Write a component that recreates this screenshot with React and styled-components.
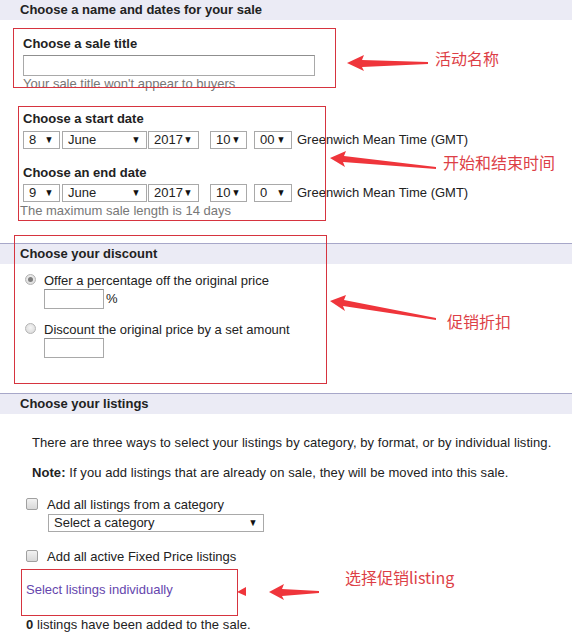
import React from 'react';
import styled, { createGlobalStyle } from 'styled-components';

const GlobalStyle = createGlobalStyle`
  html, body {
    margin: 0;
    padding: 0;
    background: #fff;
  }
  body {
    font-family: "Liberation Sans", Arial, sans-serif;
    font-size: 13px;
    color: #222;
  }
`;

const Page = styled.div`
  position: relative;
  width: 572px;
  height: 640px;
  overflow: hidden;
`;

const SectionHeader = styled.div`
  height: 20px;
  line-height: 20px;
  padding-left: 20px;
  background: #ebebf5;
  border-top: ${(p) => (p.$first ? 'none' : '1px solid #a7a7c9')};
  margin-top: ${(p) => p.$mt || 0}px;
  font-weight: bold;
  color: #222;
`;

const Body = styled.div`
  display: flex;
  flex-direction: column;
  align-items: flex-start;
  padding-left: ${(p) => p.$pl}px;
`;

const Label = styled.div`
  font-weight: bold;
  line-height: 16px;
  margin-top: ${(p) => p.$mt || 0}px;
`;

const Hint = styled.div`
  color: #777;
  line-height: 15px;
  margin-top: ${(p) => p.$mt || 0}px;
  margin-left: ${(p) => p.$ml || 0}px;
`;

const TextInput = styled.div`
  box-sizing: border-box;
  width: ${(p) => p.$w}px;
  height: ${(p) => p.$h}px;
  border: 1px solid #a9a9a9;
  border-top-color: #8f8f8f;
  background: #fff;
  margin-top: ${(p) => p.$mt || 0}px;
`;

const DateRow = styled.div`
  display: flex;
  align-items: center;
  margin-top: ${(p) => p.$mt || 0}px;
  height: 18px;
`;

const SelectBox = styled.div`
  box-sizing: border-box;
  display: flex;
  align-items: center;
  justify-content: space-between;
  width: ${(p) => p.$w}px;
  height: ${(p) => p.$h || 18}px;
  margin-left: ${(p) => p.$ml || 0}px;
  margin-top: ${(p) => p.$mt || 0}px;
  padding: 0 5px 0 5px;
  border: 1px solid #a9a9a9;
  background: #fff;
  line-height: 16px;
  color: #222;
`;

const Caret = styled.span`
  font-size: 10px;
  color: #111;
  transform: scaleX(0.9);
`;

const Zone = styled.span`
  margin-left: 5px;
  line-height: 16px;
`;

const OptionRow = styled.div`
  display: flex;
  align-items: flex-start;
  margin-top: ${(p) => p.$mt || 0}px;
  line-height: 16px;
`;

const Radio = styled.span`
  box-sizing: border-box;
  width: 11px;
  height: 11px;
  margin: 1px 8px 0 0;
  border-radius: 50%;
  border: 1px solid #b4b4b4;
  background: radial-gradient(circle at 50% 40%, #f4f4f4, #d6d6d6);
  display: flex;
  align-items: center;
  justify-content: center;

  &::after {
    content: '';
    width: 5px;
    height: 5px;
    border-radius: 50%;
    background: ${(p) => (p.$checked ? '#7d7d7d' : 'transparent')};
  }
`;

const Checkbox = styled.span`
  box-sizing: border-box;
  width: 12px;
  height: 12px;
  margin: 1px 9px 0 0;
  border-radius: 2px;
  border: 1px solid #a0a0a0;
  background: linear-gradient(#f2f2f2, #d8d8d8);
`;

const AmountRow = styled.div`
  display: flex;
  align-items: flex-end;
  margin-left: 19px;
`;

const Percent = styled.span`
  margin-left: 2px;
  line-height: 16px;
  margin-bottom: 2px;
`;

const Para = styled.div`
  line-height: 16px;
  letter-spacing: 0.07px;
  margin-top: ${(p) => p.$mt || 0}px;
  margin-left: ${(p) => p.$ml || 0}px;
`;

const Link = styled.a`
  color: #6546ad;
  text-decoration: none;
  line-height: 16px;
  margin-top: ${(p) => p.$mt || 0}px;
`;

/* annotation layer drawn over the screenshot */
const AnnoBox = styled.div`
  position: absolute;
  left: ${(p) => p.$x}px;
  top: ${(p) => p.$y}px;
  width: ${(p) => p.$w}px;
  height: ${(p) => p.$h}px;
  border: 1px solid #d6343f;
  box-sizing: border-box;
  pointer-events: none;
`;

const AnnoLabel = styled.div`
  position: absolute;
  left: ${(p) => p.$x}px;
  top: ${(p) => p.$y}px;
  font-family: "Noto Sans CJK SC", "Liberation Sans", sans-serif;
  font-size: 16px;
  line-height: 20px;
  color: #dd3f47;
  white-space: nowrap;
`;

const ArrowLayer = styled.svg`
  position: absolute;
  left: 0;
  top: 0;
  pointer-events: none;
`;

const Select = ({ w, value, ml, mt, h }) => (
  <SelectBox $w={w} $ml={ml} $mt={mt} $h={h}>
    <span>{value}</span>
    <Caret>▼</Caret>
  </SelectBox>
);

const DateSelects = ({ day, minute, mt }) => (
  <DateRow $mt={mt}>
    <Select w={37} value={day} />
    <Select w={85} value="June" ml={2} />
    <Select w={51} value="2017" ml={1} />
    <Select w={37} value="10" ml={11} />
    <Select w={38} value={minute} ml={7} />
    <Zone>Greenwich Mean Time (GMT)</Zone>
  </DateRow>
);

export default function App() {
  return (
    <Page>
      <GlobalStyle />

      <SectionHeader $first>Choose a name and dates for your sale</SectionHeader>
      <Body $pl={23}>
        <Label $mt={16}>Choose a sale title</Label>
        <TextInput $w={292} $h={21} $mt={3} />
        <Hint>Your sale title won't appear to buyers</Hint>

        <Label $mt={20}>Choose a start date</Label>
        <DateSelects day="8" minute="00" mt={4} />

        <Label $mt={16}>Choose an end date</Label>
        <DateSelects day="9" minute="0" mt={3} />
        <Hint $mt={1} $ml={-3}>The maximum sale length is 14 days</Hint>
      </Body>

      <SectionHeader $mt={25}>Choose your discount</SectionHeader>
      <Body $pl={25}>
        <OptionRow $mt={9}>
          <Radio $checked />
          Offer a percentage off the original price
        </OptionRow>
        <AmountRow>
          <TextInput $w={60} $h={20} />
          <Percent>%</Percent>
        </AmountRow>
        <OptionRow $mt={13}>
          <Radio />
          Discount the original price by a set amount
        </OptionRow>
        <AmountRow>
          <TextInput $w={60} $h={20} />
        </AmountRow>
      </Body>

      <SectionHeader $mt={35}>Choose your listings</SectionHeader>
      <Body $pl={26}>
        <Para $mt={21} $ml={6}>
          There are three ways to select your listings by category, by format, or by individual listing.
        </Para>
        <Para $mt={14} $ml={6}>
          <b>Note:</b> If you add listings that are already on sale, they will be moved into this sale.
        </Para>
        <OptionRow $mt={16}>
          <Checkbox />
          Add all listings from a category
        </OptionRow>
        <Select w={216} value="Select a category" ml={22} mt={1} />
        <OptionRow $mt={17}>
          <Checkbox />
          Add all active Fixed Price listings
        </OptionRow>
        <Link href="#" $mt={17}>Select listings individually</Link>
        <Para $mt={19}>
          <b>0</b> listings have been added to the sale.
        </Para>
      </Body>

      <AnnoBox $x={13} $y={28} $w={323} $h={60} />
      <AnnoBox $x={18} $y={106} $w={308} $h={115} />
      <AnnoBox $x={14} $y={235} $w={313} $h={149} />
      <AnnoBox $x={21} $y={569} $w={217} $h={47} />

      <ArrowLayer width="572" height="640" viewBox="0 0 572 640">
        <g fill="#ef353b">
          <polygon points="347,63 364,55 362,60 428,62 428,64 362,67 364,71" />
          <polygon points="330,158 346,151 344,156 436,167 436,169 343,162 345,167" />
          <polygon points="330,301 346,295 344,300 436,318 436,320 343,306 345,311" />
          <polygon points="237,592 246,587 246,596" />
          <polygon points="269,592 284,584 282,589 319,591 319,593 282,596 284,600" />
        </g>
      </ArrowLayer>

      <AnnoLabel $x={435} $y={48}>活动名称</AnnoLabel>
      <AnnoLabel $x={443} $y={152}>开始和结束时间</AnnoLabel>
      <AnnoLabel $x={447} $y={311}>促销折扣</AnnoLabel>
      <AnnoLabel $x={345} $y={567}>选择促销listing</AnnoLabel>
    </Page>
  );
}
